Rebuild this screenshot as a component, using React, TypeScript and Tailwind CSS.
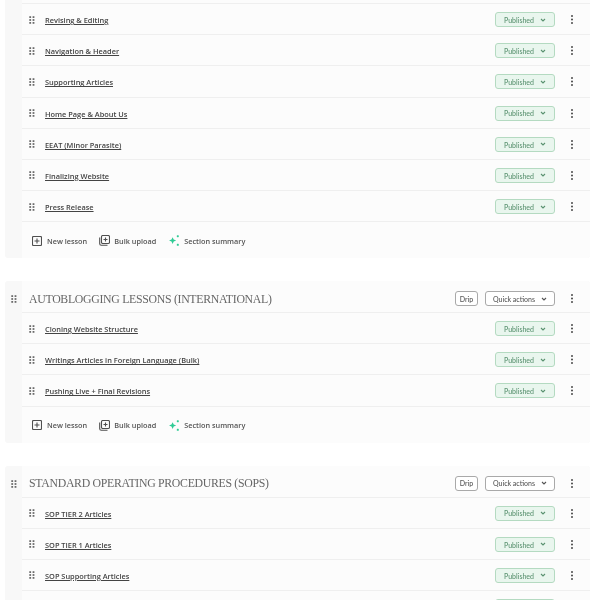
import React from "react";

const Grip = ({ className = "" }: { className?: string }) => (
  <svg width="6" height="8" viewBox="0 0 6 8" className={className} fill="#6b6b6b">
    {[0.2, 3.1, 6].map((y) => (
      <g key={y}>
        <rect x="0.3" y={y} width="1.8" height="1.8" />
        <rect x="3.6" y={y} width="1.8" height="1.8" />
      </g>
    ))}
  </svg>
);

const Kebab = () => (
  <svg width="4" height="9" viewBox="0 0 4 9" fill="#3f3f3f">
    <circle cx="2" cy="1" r="0.95" />
    <circle cx="2" cy="4.5" r="0.95" />
    <circle cx="2" cy="8" r="0.95" />
  </svg>
);

const Chev = ({ color }: { color: string }) => (
  <svg width="6" height="4" viewBox="0 0 6 4" fill="none" stroke={color} strokeWidth="1.1">
    <path d="M1 1 3 3 5 1" />
  </svg>
);

const Published = () => (
  <div className="w-[60px] h-[15px] flex items-center justify-center gap-[6px] rounded-[3px] border border-[#b4dac1] bg-[#e9f6ee] text-[7px] text-[#5a9270] font-['Lato',sans-serif] font-medium">
    <span className="mt-px">Published</span>
    <Chev color="#5a9270" />
  </div>
);

const Row = ({ title }: { title: string }) => (
  <div className="h-[31.15px] pt-px border-b border-[#efefef] flex items-center pl-[7px] pr-[16px]">
    <Grip />
    <a className="ml-[10px] mt-[2px] text-[7.4px] text-[#444444] underline font-['Open_Sans',sans-serif] font-semibold">{title}</a>
    <div className="ml-auto flex items-center gap-[15px]">
      <Published />
      <Kebab />
    </div>
  </div>
);

const FooterAction = ({ icon, label, cls }: { icon: React.ReactNode; label: string; cls: string }) => (
  <div className={`flex items-center ${cls}`}>
    {icon}
    <span className="mt-px text-[7.3px] text-[#555555] font-['Open_Sans',sans-serif] font-semibold">{label}</span>
  </div>
);

const Footer = () => (
  <div className="h-[36px] pt-px flex items-center pl-[10px]">
    <FooterAction
      cls="mr-[12px] gap-[5px]"
      label="New lesson"
      icon={
        <svg width="10" height="10" viewBox="0 0 10 10" fill="none" stroke="#4f4f4f" strokeWidth="1.1">
          <rect x="0.5" y="0.5" width="9" height="9" rx="1" />
          <path d="M5 2.5v5M2.5 5h5" />
        </svg>
      }
    />
    <FooterAction
      cls="mr-[13px] gap-[4px]"
      label="Bulk upload"
      icon={
        <svg width="11" height="11" viewBox="0 0 11 11" fill="none" stroke="#4f4f4f" strokeWidth="1.1">
          <rect x="2.5" y="0.5" width="8" height="8" rx="1.2" />
          <path d="M0.7 2.5v6.2a1.6 1.6 0 0 0 1.6 1.6h6.2M6.5 2.5v4M4.5 4.5h4" />
        </svg>
      }
    />
    <FooterAction
      cls="gap-[4px]"
      label="Section summary"
      icon={
        <svg width="11" height="11" viewBox="0 0 11 11" fill="#2fcb95">
          <path d="M3.6 2.2 4.7 4.6 7.2 5.6 4.7 6.6 3.6 9 2.5 6.6 0 5.6 2.5 4.6Z" />
          <rect x="7.8" y="0.2" width="2" height="2" rx="0.6" />
          <rect x="7.8" y="8.8" width="2" height="2" rx="0.6" />
        </svg>
      }
    />
  </div>
);

const Card = ({
  title,
  rows,
  className = "",
  footer = true,
}: {
  title?: string;
  rows: string[];
  className?: string;
  footer?: boolean;
}) => (
  <section className={`flex w-[585px] ml-[5px] rounded-[3px] bg-[#f8f8f8] ${className}`}>
    <div className="w-[17px] shrink-0 flex justify-center pt-[14px]">{title && <Grip />}</div>
    <div className="flex-1 bg-[#fcfcfc] rounded-r-[3px]">
      {title && (
        <div className="h-[32px] pt-[4px] border-b border-[#efefef] flex items-center pl-[7px] pr-[16px]">
          <h2 className="mt-[2px] text-[11.8px] tracking-[-0.3px] text-[#666666] font-['Liberation_Serif',serif] font-normal">{title}</h2>
          <div className="ml-auto flex items-center">
            <div className="w-[23px] h-[15px] flex items-center justify-center rounded-[3px] border border-[#a9a9a9] bg-white text-[7px] text-[#555555] font-['Lato',sans-serif] font-medium mr-[7px]">
              <span className="mt-px">Drip</span>
            </div>
            <div className="w-[70px] h-[15px] flex items-center justify-center gap-[6px] rounded-[3px] border border-[#a9a9a9] bg-white text-[7px] text-[#555555] font-['Lato',sans-serif] font-medium mr-[15px]">
              <span className="mt-px">Quick actions</span>
              <Chev color="#555555" />
            </div>
            <Kebab />
          </div>
        </div>
      )}
      {rows.map((r, i) => (
        <Row key={i} title={r} />
      ))}
      {footer && <Footer />}
    </div>
  </section>
);

export default function App() {
  return (
    <div className="h-[600px] w-[600px] overflow-hidden bg-white blur-[0.35px]">
      <div className="-mt-[27px]">
        <Card
          rows={[
            "",
            "Revising & Editing",
            "Navigation & Header",
            "Supporting Articles",
            "Home Page & About Us",
            "EEAT (Minor Parasite)",
            "Finalizing Website",
            "Press Release",
          ]}
        />
        <Card
          className="mt-[23px]"
          title="AUTOBLOGGING LESSONS (INTERNATIONAL)"
          rows={["Cloning Website Structure", "Writings Articles in Foreign Language (Bulk)", "Pushing Live + Final Revisions"]}
        />
        <Card
          className="mt-[23px]"
          title="STANDARD OPERATING PROCEDURES (SOPS)"
          rows={["SOP TIER 2 Articles", "SOP TIER 1 Articles", "SOP Supporting Articles", ""]}
          footer={false}
        />
      </div>
    </div>
  );
}
